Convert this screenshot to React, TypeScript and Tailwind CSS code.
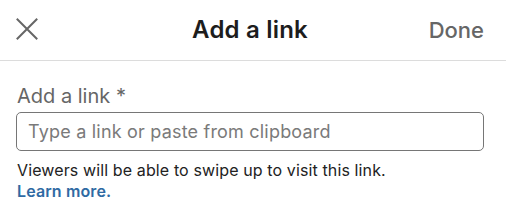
export default function App() {
  return (
    <div className="w-[506px] h-[204px] bg-white overflow-hidden font-['Inter','Liberation_Sans',Arial,sans-serif]">
      <header className="h-[61px] pl-4 pr-[22px] grid grid-cols-[1fr_auto_1fr] items-center border-b border-[#dcdcdc]">
        <button className="justify-self-start w-[22px] h-[22px] -mt-[3px]" aria-label="Close">
          <svg viewBox="0 0 22 22" className="w-[22px] h-[22px]" fill="none" stroke="#666" strokeWidth="2" strokeLinecap="square">
            <path d="M1.5 1.5L20.5 20.5M20.5 1.5L1.5 20.5" />
          </svg>
        </button>
        <h1 className="text-[24px] leading-none font-semibold text-[#1d1d1d] tracking-[0.2px]">Add a link</h1>
        <button className="justify-self-end text-[22px] leading-none font-medium text-[#666]">Done</button>
      </header>
      <div className="pl-4 pr-[22px] pt-[23px]">
        <label className="block pl-px text-[20px] leading-[24px] text-[#666]">Add a link *</label>
        <div className="mt-1 h-[39px] rounded-[5px] border-[1.5px] border-[#767676] flex items-center px-[11px]">
          <span className="text-[18px] leading-[22px] text-[#7a7a7a] tracking-[0.2px]">Type a link or paste from clipboard</span>
        </div>
        <p className="mt-[9px] pl-px text-[16px] leading-[21px] text-[#222] tracking-[0.12px]">
          Viewers will be able to swipe up to visit this link.
          <br />
          <a className="font-semibold text-[#2f6aa3]">Learn more.</a>
        </p>
      </div>
    </div>
  );
}
